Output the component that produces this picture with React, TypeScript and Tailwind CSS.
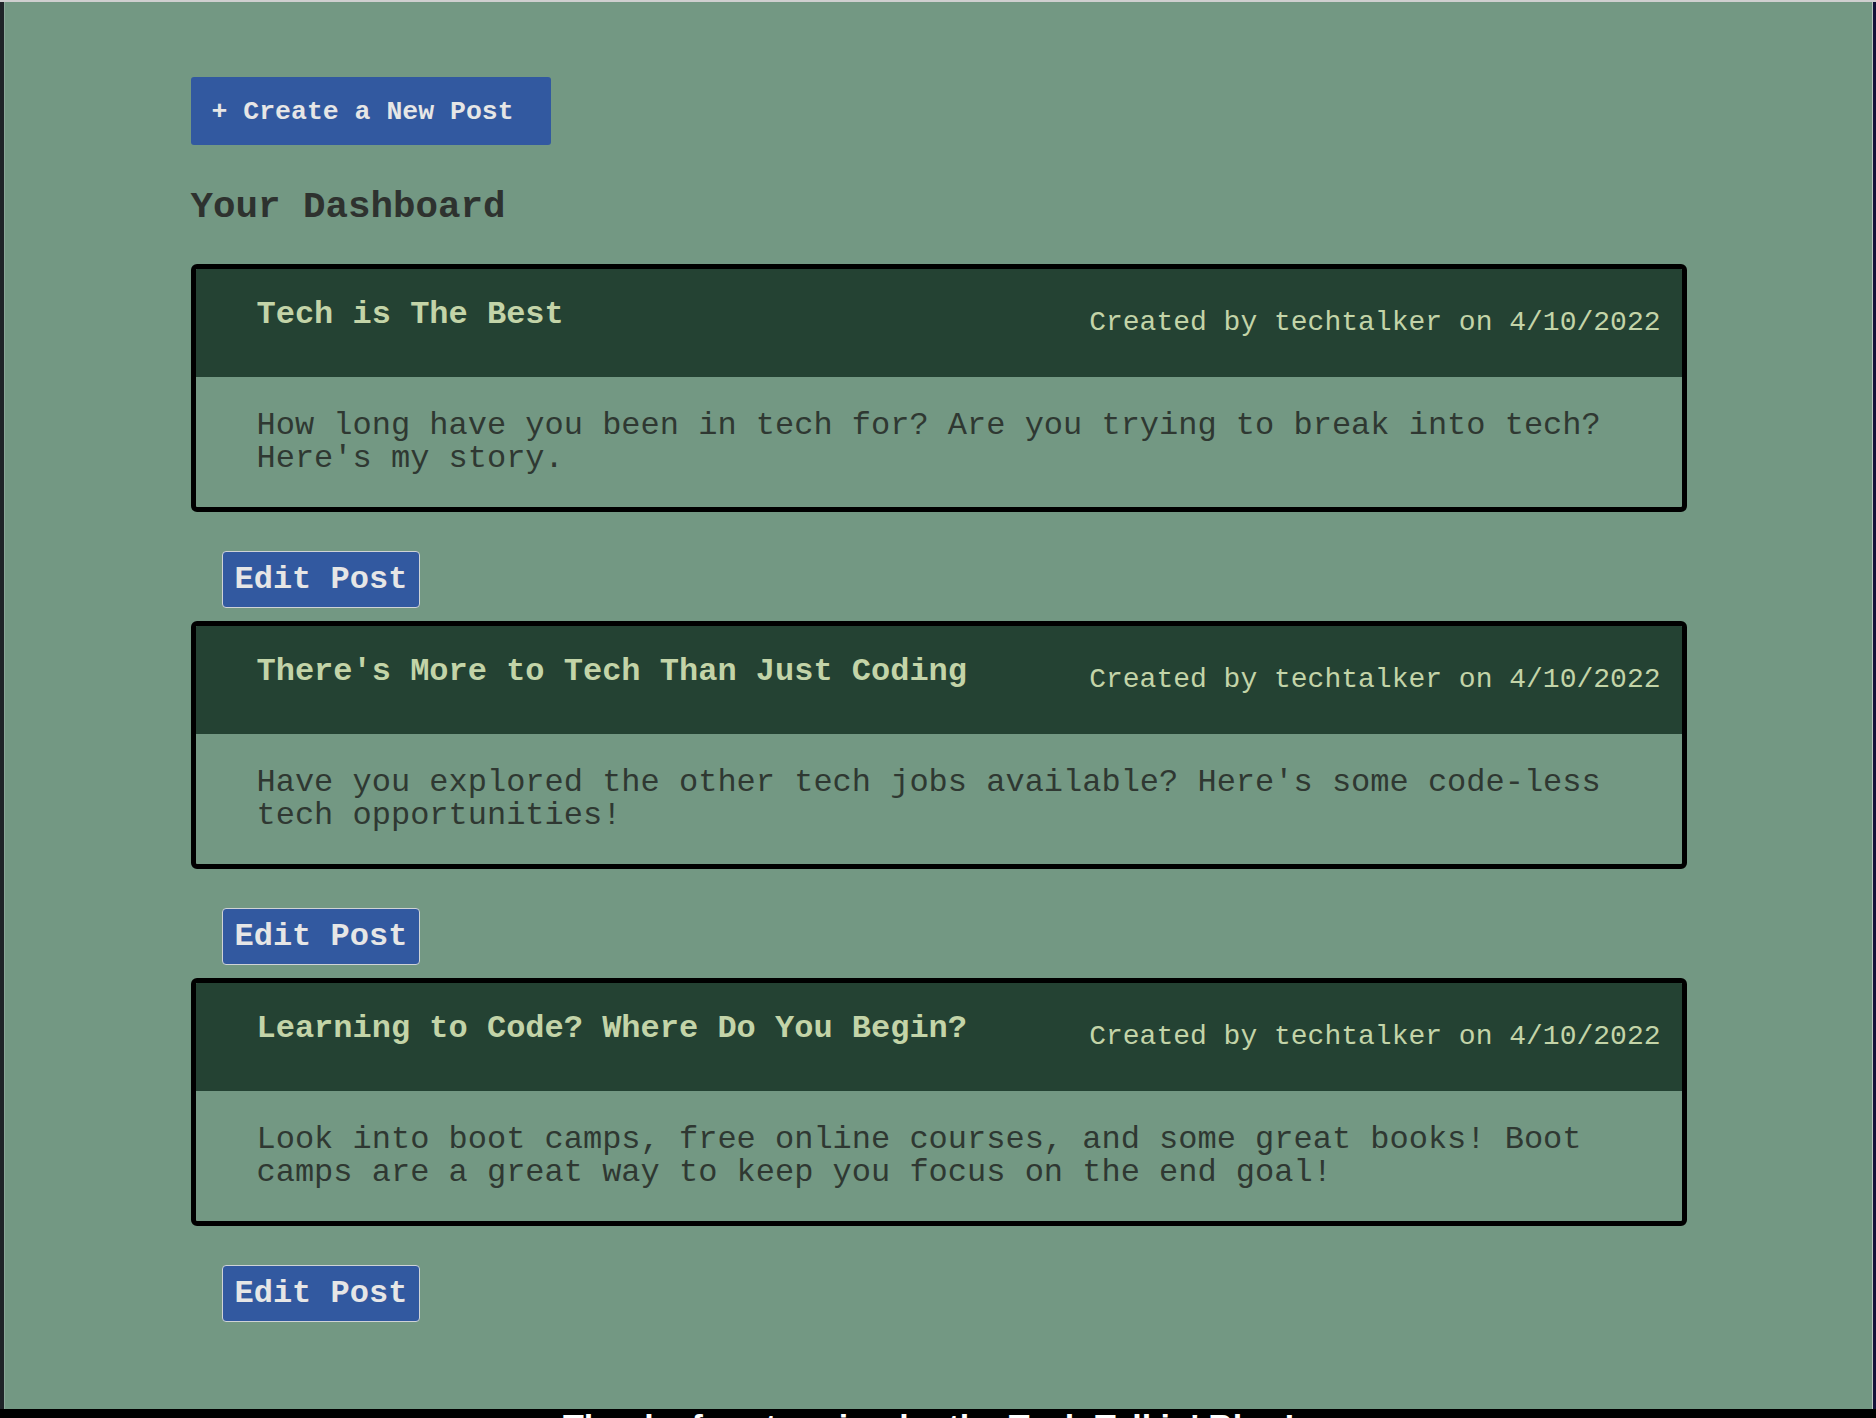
import React from 'react';

interface Post {
  id: number;
  title: string;
  body: string;
  author: string;
  date: string;
}

const posts: Post[] = [
  {
    id: 1,
    title: 'Tech is The Best',
    body: "How long have you been in tech for? Are you trying to break into tech? Here's my story.",
    author: 'techtalker',
    date: '4/10/2022',
  },
  {
    id: 2,
    title: "There's More to Tech Than Just Coding",
    body: "Have you explored the other tech jobs available? Here's some code-less tech opportunities!",
    author: 'techtalker',
    date: '4/10/2022',
  },
  {
    id: 3,
    title: 'Learning to Code? Where Do You Begin?',
    body: 'Look into boot camps, free online courses, and some great books! Boot camps are a great way to keep you focus on the end goal!',
    author: 'techtalker',
    date: '4/10/2022',
  },
];

const PostCard: React.FC<{ post: Post }> = ({ post }) => (
  <div>
    <div className="border-[5px] border-black rounded-[6px] overflow-hidden">
      <div className="h-[108px] bg-[#244233] flex items-start justify-between pl-[61px] pr-[21px]">
        <h3 className="pt-[30px] text-[32px] leading-[32px] font-bold text-[#c3d4a8]">
          {post.title}
        </h3>
        <p className="pt-[40px] text-[28px] leading-[28px] text-[#c3d4a8] whitespace-nowrap">
          Created by {post.author} on {post.date}
        </p>
      </div>
      <div className="h-[130px] pl-[61px] pr-[21px] pt-[32px]">
        <p className="text-[32px] leading-[33px] text-[#2f3832]">{post.body}</p>
      </div>
    </div>
    <button className="mt-[39px] mb-[13px] ml-[31px] h-[57px] px-[12px] flex items-center bg-[#3259a0] border border-[#cfd3d6] rounded-[4px] text-[32px] leading-[32px] font-bold text-[#e6e6e6]">
      Edit Post
    </button>
  </div>
);

export default function App() {
  return (
    <div className="w-full h-[1418px] overflow-hidden flex flex-col bg-black font-['Liberation_Mono','Courier_New',monospace]">
      <div className="h-[2px] shrink-0 bg-[#cfcfcf]" />
      <div className="h-[1407px] shrink-0 flex">
        <div className="w-[5px] shrink-0 bg-[#1f2428] border-r border-[#8aa898]" />
        <main className="flex-1 bg-[#739883]">
          <div className="w-[1496px] mx-auto pt-[75px]">
            <button className="w-[360px] h-[68px] pl-[21px] pt-[22px] text-left flex items-start bg-[#3259a0] rounded-[3px] text-[26.5px] leading-[26.5px] font-bold text-[#e6e6e6]">
              + Create a New Post
            </button>
            <h2 className="mt-[43px] mb-[38px] text-[37.5px] leading-[38px] font-bold text-[#2e322f]">
              Your Dashboard
            </h2>
            {posts.map((post) => (
              <PostCard key={post.id} post={post} />
            ))}
          </div>
        </main>
        <div className="w-[1px] shrink-0 bg-[#b9c4bd]" />
        <div className="w-[3px] shrink-0 bg-[#14123a]" />
      </div>
      <footer className="h-[60px] shrink-0 bg-black pl-[563px]">
        <p className="font-['Liberation_Sans',Arial,sans-serif] text-[34px] leading-none font-bold text-white whitespace-nowrap">
          Thanks for stopping by the Tech Talkin' Blog!
        </p>
      </footer>
    </div>
  );
}
